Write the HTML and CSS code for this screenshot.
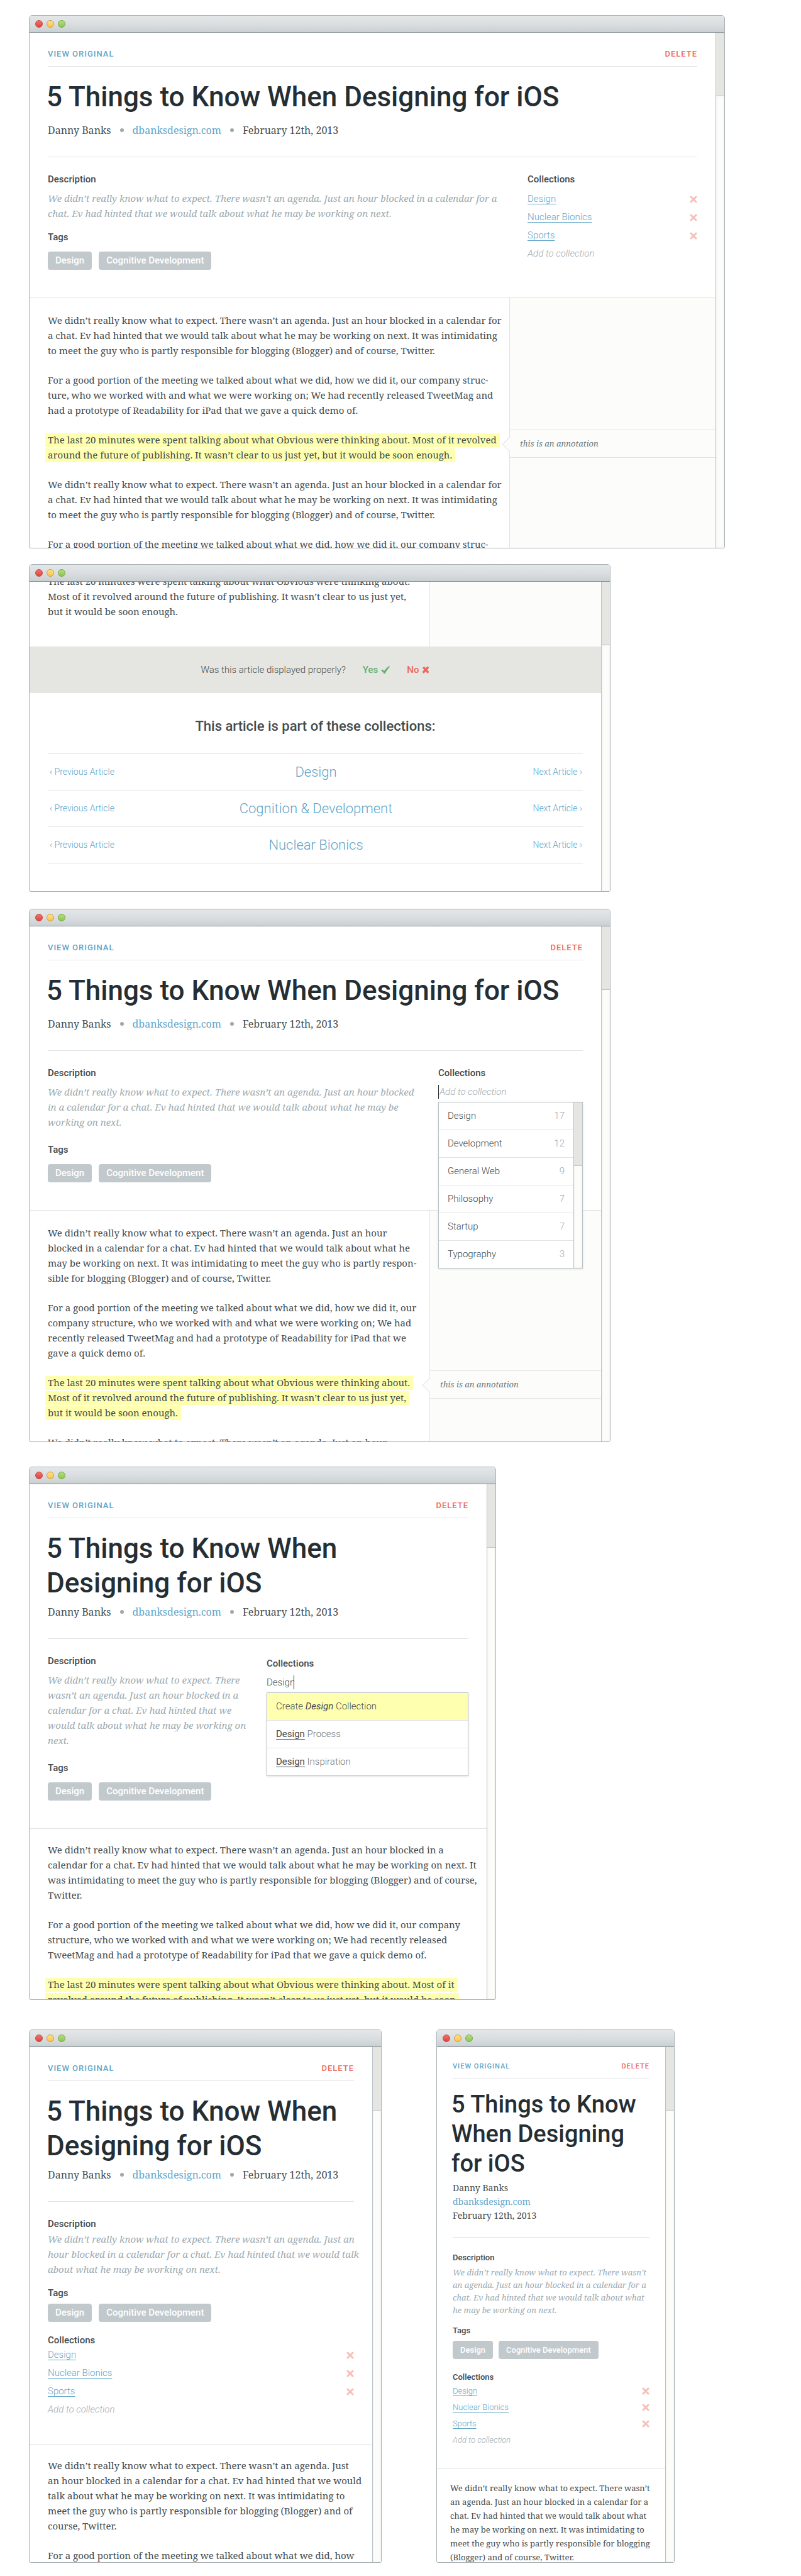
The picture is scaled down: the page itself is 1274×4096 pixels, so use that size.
FILE: index.html
```html
<!DOCTYPE html>
<html lang="en">
<head>
<meta charset="utf-8">
<meta name="viewport" content="width=device-width, initial-scale=1">
<title>Article page, responsive views</title>
<link rel="stylesheet" href="styles.css">
</head>
<body>
<svg class="defs" aria-hidden="true">
  <symbol id="cross" viewBox="0 0 12 12"><path d="M2 2 10 10M10 2 2 10" fill="none" stroke="currentColor" stroke-width="3" stroke-linecap="round"/></symbol>
  <symbol id="bold-cross" viewBox="0 0 12 12"><path d="M1 3 3.500 .5 6 3.500 8.500 .5 11.500 2.500 8.500 6 11.500 9.500 9 12 6 8.500 3 12 .5 9.500 3.500 6Z" fill="currentColor"/></symbol>
  <symbol id="check" viewBox="0 0 14 12"><path d="M0 7 2.500 5.500 5 8 C7 5 9.500 2 13 0 L14 1 C11 4.500 8.500 8 6.500 12 L4.500 12 C3.500 10 2 8.500 0 7Z" fill="currentColor"/></symbol>
</svg>
<main class="page">

  <section class="frame frame-wide">
    <div class="titlebar"><i class="light red"></i><i class="light yellow"></i><i class="light green"></i></div>
    <div class="viewport">
      <article class="screen">
        <header class="masthead">
          <div class="topbar"><a href="#original">View Original</a><button type="button" class="delete">Delete</button></div>
          <h1>5 Things to Know When Designing for iOS</h1>
          <div class="byline"><span>Danny Banks</span><i class="dot"></i><a href="#author">dbanksdesign.com</a><i class="dot"></i><span>February 12th, 2013</span></div>
        </header>
        <div class="details">
          <div class="about">
            <h2 class="label">Description</h2>
            <p class="summary">We didn’t really know what to expect. There wasn’t an agenda. Just an hour blocked in a calendar for a<br>chat. Ev had hinted that we would talk about what he may be working on next.</p>
            <h2 class="label tags-label">Tags</h2>
            <div class="tags"><a href="#design">Design</a><a href="#cognitive">Cognitive Development</a></div>
          </div>
          <div class="collections">
            <h2 class="label">Collections</h2>
            <ul class="links">
              <li><a href="#design">Design</a><button type="button" aria-label="Remove Design"><svg><use href="#cross"/></svg></button></li>
              <li><a href="#nuclear">Nuclear Bionics</a><button type="button" aria-label="Remove Nuclear Bionics"><svg><use href="#cross"/></svg></button></li>
              <li><a href="#sports">Sports</a><button type="button" aria-label="Remove Sports"><svg><use href="#cross"/></svg></button></li>
              <li><button type="button" class="add">Add to collection</button></li>
            </ul>
          </div>
        </div>
        <div class="reading">
          <div class="story">
            <p>We didn’t really know what to expect. There wasn’t an agenda. Just an hour blocked in a calendar for<br>a chat. Ev had hinted that we would talk about what he may be working on next. It was intimidating<br>to meet the guy who is partly responsible for blogging (Blogger) and of course, Twitter.</p>
            <p>For a good portion of the meeting we talked about what we did, how we did it, our company struc-<br>ture, who we worked with and what we were working on; We had recently released TweetMag and<br>had a prototype of Readability for iPad that we gave a quick demo of.</p>
            <p><mark>The last 20 minutes were spent talking about what Obvious were thinking about. Most of it revolved<br>around the future of publishing. It wasn’t clear to us just yet, but it would be soon enough.</mark></p>
            <p>We didn’t really know what to expect. There wasn’t an agenda. Just an hour blocked in a calendar for<br>a chat. Ev had hinted that we would talk about what he may be working on next. It was intimidating<br>to meet the guy who is partly responsible for blogging (Blogger) and of course, Twitter.</p>
            <p>For a good portion of the meeting we talked about what we did, how we did it, our company struc-</p>
          </div>
          <aside class="margin"><p class="note">this is an annotation</p></aside>
        </div>
      </article>
      <div class="scroll"><div class="thumb"></div></div>
    </div>
  </section>

  <section class="frame frame-tablet frame-footer">
    <div class="titlebar"><i class="light red"></i><i class="light yellow"></i><i class="light green"></i></div>
    <div class="viewport">
      <div class="screen">
        <div class="reading reading-end">
          <div class="story">
            <p>The last 20 minutes were spent talking about what Obvious were thinking about.<br>Most of it revolved around the future of publishing. It wasn’t clear to us just yet,<br>but it would be soon enough.</p>
          </div>
          <aside class="margin"></aside>
        </div>
        <div class="feedback">
          <span>Was this article displayed properly?</span>
          <button type="button" class="yes">Yes <svg><use href="#check"/></svg></button>
          <button type="button" class="no">No <svg><use href="#bold-cross"/></svg></button>
        </div>
        <h2 class="part-of">This article is part of these collections:</h2>
        <ul class="pager">
          <li><a href="#p1">‹ Previous Article</a><a class="name" href="#c1">Design</a><a class="next" href="#n1">Next Article ›</a></li>
          <li><a href="#p2">‹ Previous Article</a><a class="name" href="#c2">Cognition &amp; Development</a><a class="next" href="#n2">Next Article ›</a></li>
          <li><a href="#p3">‹ Previous Article</a><a class="name" href="#c3">Nuclear Bionics</a><a class="next" href="#n3">Next Article ›</a></li>
        </ul>
      </div>
      <div class="scroll"><div class="thumb"></div></div>
    </div>
  </section>

  <section class="frame frame-tablet frame-browse">
    <div class="titlebar"><i class="light red"></i><i class="light yellow"></i><i class="light green"></i></div>
    <div class="viewport">
      <article class="screen">
        <header class="masthead">
          <div class="topbar"><a href="#original">View Original</a><button type="button" class="delete">Delete</button></div>
          <h1>5 Things to Know When Designing for iOS</h1>
          <div class="byline"><span>Danny Banks</span><i class="dot"></i><a href="#author">dbanksdesign.com</a><i class="dot"></i><span>February 12th, 2013</span></div>
        </header>
        <div class="details roomy">
          <div class="about">
            <h2 class="label">Description</h2>
            <p class="summary">We didn’t really know what to expect. There wasn’t an agenda. Just an hour blocked<br>in a calendar for a chat. Ev had hinted that we would talk about what he may be<br>working on next.</p>
            <h2 class="label tags-label">Tags</h2>
            <div class="tags"><a href="#design">Design</a><a href="#cognitive">Cognitive Development</a></div>
          </div>
          <div class="collections">
            <label class="label" for="add-browse">Collections</label>
            <input class="entry caret-start" id="add-browse" type="text" placeholder="Add to collection">
            <div class="menu menu-scroll">
              <ul>
                <li>Design <span>17</span></li>
                <li>Development <span>12</span></li>
                <li>General Web <span>9</span></li>
                <li>Philosophy <span>7</span></li>
                <li>Startup <span>7</span></li>
                <li>Typography <span>3</span></li>
              </ul>
              <div class="scroll"><div class="thumb"></div></div>
            </div>
          </div>
        </div>
        <div class="reading">
          <div class="story">
            <p>We didn’t really know what to expect. There wasn’t an agenda. Just an hour<br>blocked in a calendar for a chat. Ev had hinted that we would talk about what he<br>may be working on next. It was intimidating to meet the guy who is partly respon-<br>sible for blogging (Blogger) and of course, Twitter.</p>
            <p>For a good portion of the meeting we talked about what we did, how we did it, our<br>company structure, who we worked with and what we were working on; We had<br>recently released TweetMag and had a prototype of Readability for iPad that we<br>gave a quick demo of.</p>
            <p><mark>The last 20 minutes were spent talking about what Obvious were thinking about.<br>Most of it revolved around the future of publishing. It wasn’t clear to us just yet,<br>but it would be soon enough.</mark></p>
            <p>We didn’t really know what to expect. There wasn’t an agenda. Just an hour</p>
          </div>
          <aside class="margin"><p class="note">this is an annotation</p></aside>
        </div>
      </article>
      <div class="scroll"><div class="thumb"></div></div>
    </div>
  </section>

  <section class="frame frame-medium">
    <div class="titlebar"><i class="light red"></i><i class="light yellow"></i><i class="light green"></i></div>
    <div class="viewport">
      <article class="screen">
        <header class="masthead stacked">
          <div class="topbar"><a href="#original">View Original</a><button type="button" class="delete">Delete</button></div>
          <h1>5 Things to Know When<br>Designing for iOS</h1>
          <div class="byline"><span>Danny Banks</span><i class="dot"></i><a href="#author">dbanksdesign.com</a><i class="dot"></i><span>February 12th, 2013</span></div>
        </header>
        <div class="details roomy">
          <div class="about">
            <h2 class="label">Description</h2>
            <p class="summary">We didn’t really know what to expect. There<br>wasn’t an agenda. Just an hour blocked in a<br>calendar for a chat. Ev had hinted that we<br>would talk about what he may be working on<br>next.</p>
            <h2 class="label tags-label">Tags</h2>
            <div class="tags"><a href="#design">Design</a><a href="#cognitive">Cognitive Development</a></div>
          </div>
          <div class="collections">
            <label class="label" for="add-search">Collections</label>
            <input class="entry caret-end" id="add-search" type="text" value="Design">
            <ul class="menu">
              <li class="create"><div>Create <b><i>Design</i></b> Collection</div></li>
              <li class="match"><div><b>Design</b> Process</div></li>
              <li class="match"><div><b>Design</b> Inspiration</div></li>
            </ul>
          </div>
        </div>
        <div class="reading">
          <div class="story">
            <p>We didn’t really know what to expect. There wasn’t an agenda. Just an hour blocked in a<br>calendar for a chat. Ev had hinted that we would talk about what he may be working on next. It<br>was intimidating to meet the guy who is partly responsible for blogging (Blogger) and of course,<br>Twitter.</p>
            <p>For a good portion of the meeting we talked about what we did, how we did it, our company<br>structure, who we worked with and what we were working on; We had recently released<br>TweetMag and had a prototype of Readability for iPad that we gave a quick demo of.</p>
            <p><mark>The last 20 minutes were spent talking about what Obvious were thinking about. Most of it<br>revolved around the future of publishing. It wasn’t clear to us just yet, but it would be soon</mark></p>
          </div>
        </div>
      </article>
      <div class="scroll"><div class="thumb"></div></div>
    </div>
  </section>

  <div class="pair">
    <section class="frame frame-small">
      <div class="titlebar"><i class="light red"></i><i class="light yellow"></i><i class="light green"></i></div>
      <div class="viewport">
        <article class="screen">
          <header class="masthead stacked">
            <div class="topbar"><a href="#original">View Original</a><button type="button" class="delete">Delete</button></div>
            <h1>5 Things to Know When<br>Designing for iOS</h1>
            <div class="byline"><span>Danny Banks</span><i class="dot"></i><a href="#author">dbanksdesign.com</a><i class="dot"></i><span>February 12th, 2013</span></div>
          </header>
          <div class="details single">
            <div class="about">
              <h2 class="label">Description</h2>
              <p class="summary">We didn’t really know what to expect. There wasn’t an agenda. Just an<br>hour blocked in a calendar for a chat. Ev had hinted that we would talk<br>about what he may be working on next.</p>
              <h2 class="label tags-label">Tags</h2>
              <div class="tags"><a href="#design">Design</a><a href="#cognitive">Cognitive Development</a></div>
            </div>
            <div class="collections">
              <h2 class="label">Collections</h2>
              <ul class="links">
                <li><a href="#design">Design</a><button type="button" aria-label="Remove Design"><svg><use href="#cross"/></svg></button></li>
                <li><a href="#nuclear">Nuclear Bionics</a><button type="button" aria-label="Remove Nuclear Bionics"><svg><use href="#cross"/></svg></button></li>
                <li><a href="#sports">Sports</a><button type="button" aria-label="Remove Sports"><svg><use href="#cross"/></svg></button></li>
                <li><button type="button" class="add">Add to collection</button></li>
              </ul>
            </div>
          </div>
          <div class="reading">
            <div class="story">
              <p>We didn’t really know what to expect. There wasn’t an agenda. Just<br>an hour blocked in a calendar for a chat. Ev had hinted that we would<br>talk about what he may be working on next. It was intimidating to<br>meet the guy who is partly responsible for blogging (Blogger) and of<br>course, Twitter.</p>
              <p>For a good portion of the meeting we talked about what we did, how</p>
            </div>
          </div>
        </article>
        <div class="scroll"><div class="thumb"></div></div>
      </div>
    </section>

    <section class="frame frame-phone">
      <div class="titlebar"><i class="light red"></i><i class="light yellow"></i><i class="light green"></i></div>
      <div class="viewport">
        <article class="screen">
          <header class="masthead stacked">
            <div class="topbar"><a href="#original">View Original</a><button type="button" class="delete">Delete</button></div>
            <h1>5 Things to Know<br>When Designing<br>for iOS</h1>
            <div class="byline"><span>Danny Banks</span><a href="#author">dbanksdesign.com</a><span>February 12th, 2013</span></div>
          </header>
          <div class="details single">
            <div class="about">
              <h2 class="label">Description</h2>
              <p class="summary">We didn’t really know what to expect. There wasn’t<br>an agenda. Just an hour blocked in a calendar for a<br>chat. Ev had hinted that we would talk about what<br>he may be working on next.</p>
              <h2 class="label tags-label">Tags</h2>
              <div class="tags"><a href="#design">Design</a><a href="#cognitive">Cognitive Development</a></div>
            </div>
            <div class="collections">
              <h2 class="label">Collections</h2>
              <ul class="links">
                <li><a href="#design">Design</a><button type="button" aria-label="Remove Design"><svg><use href="#cross"/></svg></button></li>
                <li><a href="#nuclear">Nuclear Bionics</a><button type="button" aria-label="Remove Nuclear Bionics"><svg><use href="#cross"/></svg></button></li>
                <li><a href="#sports">Sports</a><button type="button" aria-label="Remove Sports"><svg><use href="#cross"/></svg></button></li>
                <li><button type="button" class="add">Add to collection</button></li>
              </ul>
            </div>
          </div>
          <div class="reading">
            <div class="story">
              <p>We didn’t really know what to expect. There wasn’t<br>an agenda. Just an hour blocked in a calendar for a<br>chat. Ev had hinted that we would talk about what<br>he may be working on next. It was intimidating to<br>meet the guy who is partly responsible for blogging<br>(Blogger) and of course, Twitter.</p>
            </div>
          </div>
        </article>
        <div class="scroll"><div class="thumb"></div></div>
      </div>
    </section>
  </div>
</main>
</body>
</html>
```
FILE: styles.css
```css
:root {
  --ink: #252e33;
  --text: #434b4e;
  --muted: #9caab0;
  --blue: #5fa5c9;
  --red: #e9695c;
  --rule: #e2e4e2;
  --paper: #fcfcfa;
  --stone: #e5e6e1;
  --edge: #bac3c7;
  --serif: "Noto Serif", "Droid Serif", "Liberation Serif", serif;
}

* { box-sizing: border-box; }

body {
  margin: 0;
  background: #fff;
  color: var(--text);
  font-family: Roboto, "Liberation Sans", sans-serif;
  font-size: 15px;
}

h1, h2, p, ul { margin: 0; padding: 0; }
ul { list-style: none; }
a { color: var(--blue); text-decoration: none; }
button { padding: 0; border: 0; background: none; font: inherit; color: inherit; cursor: pointer; }
.defs { display: none; }

.page { display: flex; flex-direction: column; padding: 24px 46px 20px; }

/* Browser frame */
.frame {
  display: flex;
  flex-direction: column;
  width: 100%;
  height: 848px;
  border: 1px solid #a9b0b3;
  border-radius: 5px 5px 3px 3px;
  overflow: hidden;
  white-space: nowrap;
}
.frame-wide { max-width: 1107px; }
.frame-tablet { max-width: 925px; }
.frame-footer { height: 521px; margin-top: 25px; }
.frame-browse { margin-top: 27px; }
.frame-medium { max-width: 743px; margin-top: 39px; }
.pair { display: flex; gap: 87px; margin-top: 47px; }
.frame-small { max-width: 561px; }
.frame-phone { max-width: 379px; }

.titlebar {
  display: flex;
  flex: none;
  align-items: center;
  gap: 6px;
  height: 27px;
  padding: 0 9px;
  border-bottom: 1px solid #858e93;
  background: linear-gradient(#e3e7e8, #dadee0 50%, #cad0d3);
}
.light { width: 12px; height: 12px; border: 1px solid; border-radius: 50%; }
.red { border-color: #cc4640; background: linear-gradient(#f0726c, #de4440); }
.yellow { border-color: #cf9c3c; background: linear-gradient(#ffe08a, #fcc24c); }
.green { border-color: #76a843; background: linear-gradient(#b5de7d, #8cc653); }

.viewport { display: flex; flex: 1; min-height: 0; }
.screen { display: flex; flex: 1; flex-direction: column; min-width: 0; overflow: hidden; }
.scroll {
  flex: none;
  width: 14px;
  border-left: 1px solid var(--edge);
  background: var(--paper);
  box-shadow: inset 0 0 3px #e9e9e6;
}
.thumb { height: 101px; border-bottom: 1px solid var(--edge); background: var(--stone); }

/* Masthead */
.masthead { margin: 0 29px; padding-bottom: 30px; border-bottom: 1px solid var(--rule); }
.topbar {
  display: flex;
  justify-content: space-between;
  padding: 26px 0 11px;
  border-bottom: 1px solid var(--rule);
  font-size: 13px;
  font-weight: 500;
  line-height: 16px;
  letter-spacing: 1px;
  text-transform: uppercase;
}
.delete { letter-spacing: 1px; text-transform: uppercase; color: var(--red); }
h1 { margin: 21px 0 0 -2px; color: var(--ink); font-size: 44px; font-weight: 500; line-height: 55px; }
.byline {
  display: flex;
  align-items: center;
  gap: 14px;
  margin-top: 13px;
  font-family: var(--serif);
  font-size: 16px;
  line-height: 24px;
}
.stacked .byline { margin-top: 6px; }
.dot { flex: none; width: 6px; height: 6px; border-radius: 50%; background: var(--muted); }

/* Description, tags and collections */
.details {
  display: flex;
  justify-content: space-between;
  padding: 26px 29px 44px;
  border-bottom: 1px solid var(--rule);
}
.label { display: block; font-size: 15px; font-weight: 500; line-height: 18px; }
.summary {
  margin-top: 9px;
  color: var(--muted);
  font-family: var(--serif);
  font-size: 15px;
  font-style: italic;
  line-height: 24px;
}
.tags-label { margin-top: 17px; }
.roomy .tags-label { margin-top: 23px; }
.tags { display: flex; gap: 11px; margin-top: 14px; }
.tags a {
  padding: 0 12px;
  border-radius: 4px;
  background: #c2c9cc;
  color: #fff;
  font-size: 15px;
  font-weight: 500;
  line-height: 29px;
}
.about { min-width: 0; }
.collections { position: relative; flex: none; width: 270px; }
.frame-tablet .collections { width: 230px; }
.frame-medium .collections { width: 321px; padding-top: 4px; }

.links { margin-top: 8px; }
.links li {
  display: flex;
  align-items: center;
  justify-content: space-between;
  font-weight: 300;
  line-height: 29px;
}
.links a { text-decoration: underline; text-decoration-thickness: 1px; text-underline-offset: 3px; }
.links button { display: flex; color: #f6bfb8; }
.links svg { width: 12px; height: 12px; }
.links .add { color: var(--muted); font-style: italic; font-weight: 300; }

.entry {
  display: block;
  height: 22px;
  margin-top: 10px;
  padding: 0;
  border: 0 solid var(--ink);
  outline: 0;
  background: none;
  color: var(--text);
  font: 300 15px Roboto, "Liberation Sans", sans-serif;
}
.entry::placeholder { color: var(--muted); font-style: italic; opacity: 1; }
.caret-start { width: 100%; padding-left: 1px; border-left-width: 1px; }
.caret-end { width: 44px; border-right-width: 1px; }

.menu {
  position: absolute;
  top: 100%;
  right: 0;
  left: 0;
  z-index: 1;
  border: 1px solid var(--edge);
  background: #fff;
  box-shadow: 0 1px 3px rgb(60 70 75 / 15%);
  font-weight: 300;
  line-height: 43px;
}
.frame .menu { top: 55px; }
.frame-medium .menu { top: 59px; }
.menu-scroll { display: flex; }
.menu ul { flex: 1; }
.menu li { display: flex; justify-content: space-between; padding: 0 14px; border-bottom: 1px solid var(--rule); }
.menu li:last-child { border-bottom: 0; }
.menu span { color: var(--muted); }
.menu .create { background: #ffffb0; }
.match { color: #6c7579; }
.match b { color: var(--text); text-decoration: underline; text-underline-offset: 3px; }

/* Article text and its margin notes */
.reading { display: flex; flex: 1; min-height: 0; }
.story {
  flex: 1;
  min-width: 0;
  padding: 23px 0 0 29px;
  font-family: var(--serif);
  font-size: 15px;
  line-height: 24px;
}
.story p + p { margin-top: 23px; }
.frame-medium .story, .frame-small .story { padding-top: 21px; }
mark {
  margin-left: -4px;
  padding: 0 5px 2px 4px;
  background: #ffffb0;
  color: inherit;
  -webkit-box-decoration-break: clone;
  box-decoration-break: clone;
}
.margin { flex: none; width: 328px; padding-top: 209px; border-left: 1px solid var(--rule); background: var(--paper); }
.frame-tablet .margin { width: 273px; }
.frame-browse .margin { padding-top: 254px; }
.frame-footer .margin { padding-top: 0; }
.note {
  position: relative;
  padding: 0 16px;
  border: 1px solid var(--rule);
  border-width: 1px 0;
  color: #6c777b;
  font-family: var(--serif);
  font-size: 13px;
  font-style: italic;
  line-height: 43px;
}
.note::before {
  content: "";
  position: absolute;
  top: 14px;
  left: -9px;
  width: 16px;
  height: 16px;
  border: 1px solid var(--rule);
  border-width: 0 0 1px 1px;
  background: linear-gradient(45deg, var(--paper) 50%, transparent 50%);
  transform: rotate(45deg);
}

/* End of the article */
.reading-end { flex: none; height: 103px; }
.reading-end .story { padding-top: 0; margin-top: -13px; }
.feedback {
  display: flex;
  flex: none;
  align-items: center;
  justify-content: center;
  gap: 27px;
  height: 74px;
  background: var(--stone);
  font-weight: 300;
}
.feedback button { display: flex; align-items: center; gap: 5px; font-weight: 500; }
.yes { color: #63b06f; }
.no { color: var(--red); }
.yes svg { width: 14px; height: 12px; }
.no svg { width: 12px; height: 12px; }
.part-of { margin-top: 39px; font-size: 22px; font-weight: 500; line-height: 28px; text-align: center; }
.pager { margin: 29px 29px 0; border-bottom: 1px solid var(--rule); }
.pager li {
  display: grid;
  grid-template-columns: 1fr auto 1fr;
  align-items: center;
  padding: 0 1px 0 3px;
  border-top: 1px solid var(--rule);
  font-size: 14px;
  font-weight: 300;
  line-height: 57px;
}
.pager .name { font-size: 22px; }
.next { text-align: right; }

/* Single column */
.single { flex-direction: column; gap: 20px; padding-bottom: 40px; }
.single .summary { margin-top: 3px; }
.single .tags { margin-top: 8px; }
.frame .single .collections { width: auto; }
.single .links { margin-top: 0; }

/* Phone */
.frame-phone .masthead { margin: 0 25px; padding-bottom: 23px; }
.frame-phone .topbar { padding: 23px 0 10px; font-size: 11px; }
.frame-phone h1 { margin-top: 18px; font-size: 38px; line-height: 47px; }
.frame-phone .byline {
  flex-direction: column;
  align-items: flex-start;
  gap: 0;
  margin-top: 4px;
  font-size: 14px;
  line-height: 22px;
}
.frame-phone .details { padding: 23px 25px 32px; }
.frame-phone .label { font-size: 13px; }
.frame-phone .summary { margin-top: 4px; font-size: 13px; line-height: 20px; }
.frame-phone .tags-label { margin-top: 14px; }
.frame-phone .tags { gap: 9px; margin-top: 7px; }
.frame-phone .tags a { font-size: 13px; }
.frame-phone .links li { font-size: 13px; line-height: 26px; }
.frame-phone .story { padding: 19px 0 0 21px; font-size: 13px; line-height: 22px; }
```
